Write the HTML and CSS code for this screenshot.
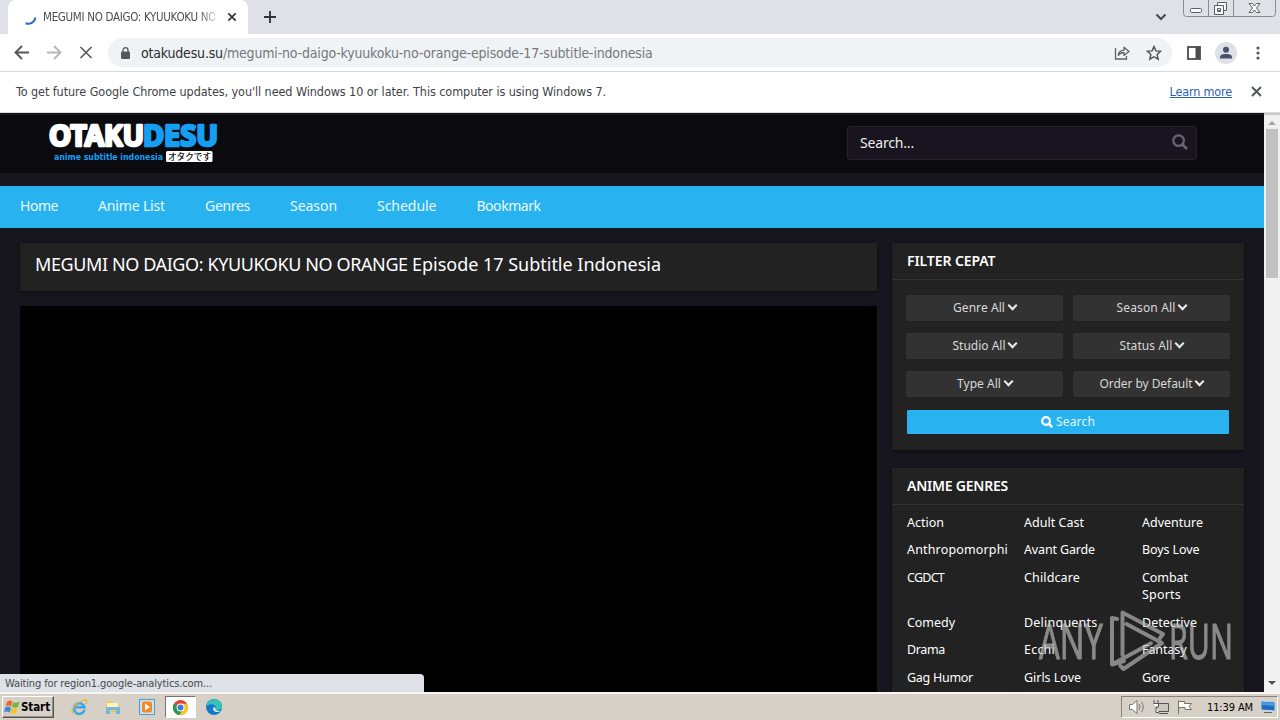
FILE: index.html
```html
<!DOCTYPE html>
<html lang="en">
<head>
<meta charset="utf-8">
<title>MEGUMI NO DAIGO: KYUUKOKU NO ORANGE Episode 17 Subtitle Indonesia</title>
<link rel="stylesheet" href="styles.css">
</head>
<body>
<div class="screen">
  <header class="tabstrip">
    <div class="tab">
      <svg class="spinner" width="16" height="16" viewBox="0 0 16 16"><path d="M1.500 12.300C6.500 14 11 11 11.300 6.500" fill="none" stroke="#2f69c9" stroke-width="2"/></svg>
      <span class="tab-title"><span class="fit" data-w="173">MEGUMI NO DAIGO: KYUUKOKU NO</span></span>
      <svg width="10" height="10" viewBox="0 0 10 10"><path d="M1.300 1.300 8.700 8.700M8.700 1.300 1.300 8.700" stroke="#333639" stroke-width="1.700"/></svg>
    </div>
    <svg class="newtab" width="12" height="12" viewBox="0 0 12 12"><path d="M6 0V12M0 6H12" stroke="#333639" stroke-width="1.900"/></svg>
    <svg class="tabsearch" width="12" height="8" viewBox="0 0 12 8"><path d="M1.500 1.500 6 6 10.500 1.500" fill="none" stroke="#46494e" stroke-width="2"/></svg>
    <svg class="winbtns" width="94" height="17" viewBox="0 0 94 17">
      <path d="M.5 0V13.500Q.5 16.500 3.500 16.500H89.500Q92.500 16.500 92.500 13.500V0M25.500 0V16M50.500 0V16" fill="none" stroke="#898d94"/>
      <g fill="#f7f8fa" stroke="#5b6068"><rect x="7.500" y="8.500" width="11" height="4" rx="1"/><path d="M34.500 2.500H43.500V10.500H34.500Z"/><path d="M31.500 5.500H40.500V14.500H31.500ZM34.500 8.500V11.500H37.500V8.500Z" fill-rule="evenodd"/><path d="M66 3.500H69.500L71.500 6 73.500 3.500H77L73.500 8 77 12.500H73.500L71.500 10 69.500 12.500H66L69.500 8Z"/></g>
    </svg>
  </header>
  <div class="toolbar">
    <svg class="navicons" width="80" height="16" viewBox="0 0 80 16" fill="none" stroke="#54575b" stroke-width="1.900"><path d="M15 7.500H2M8 1 1.500 7.500 8 14"/><path d="M33 7.500H46M40 1 46.500 7.500 40 14" stroke="#b5b7ba"/><path d="M66.500 2 77.500 13M77.500 2 66.500 13" stroke-width="1.600"/></svg>
    <div class="omnibox">
      <svg width="9" height="12" viewBox="0 0 9 12"><rect y="4.500" width="9" height="7.500" rx="1" fill="#54575b"/><path d="M2 5V3.200a2.500 2.500 0 0 1 5 0V5" fill="none" stroke="#54575b" stroke-width="1.300"/></svg>
      <span class="url fit" data-w="511.500"><b>otakudesu.su</b>/megumi-no-daigo-kyuukoku-no-orange-episode-17-subtitle-indonesia</span>
      <svg class="share" width="16" height="14" viewBox="0 0 16 14" fill="none" stroke="#5f6368" stroke-width="1.300"><path d="M1.500 2V13H12.500V10"/><path d="M4.200 9.300C4.700 5.700 7 4.300 10 4.200V1.200L15 5.400 10 9.400V6.500C7.500 6.500 5.600 7.200 4.200 9.300Z" stroke-linejoin="round"/></svg>
      <svg class="star" width="16" height="16" viewBox="0 0 16 16"><path d="M8 1.500 9.900 5.900 14.700 6.300 11.100 9.500 12.200 14.200 8 11.700 3.800 14.200 4.900 9.500 1.300 6.300 6.100 5.900Z" fill="none" stroke="#4e5156" stroke-width="1.400"/></svg>
    </div>
    <svg class="panel" width="14" height="14" viewBox="0 0 14 14"><rect x="1" y="1" width="12" height="12" fill="none" stroke="#494c50" stroke-width="1.800"/><path d="M8.500 1H13V13H8.500Z" fill="#494c50"/></svg>
    <svg class="avatar" width="22" height="22" viewBox="0 0 22 22"><circle cx="11" cy="11" r="11" fill="#dde0e5"/><circle cx="11" cy="7.800" r="3" fill="#46536f"/><path d="M5 16.500V15C5 12.500 8.500 12 11 12S17 12.500 17 15V16.500Z" fill="#46536f"/></svg>
    <svg class="dots" width="4" height="14" viewBox="0 0 4 14" fill="#54575b"><circle cx="2" cy="2" r="1.600"/><circle cx="2" cy="7" r="1.600"/><circle cx="2" cy="12" r="1.600"/></svg>
  </div>
  <div class="infobar">
    <span class="fit" data-w="590">To get future Google Chrome updates, you'll need Windows 10 or later. This computer is using Windows 7.</span>
    <a class="learn"><span class="fit" data-w="62.500">Learn more</span></a>
    <svg width="11" height="11" viewBox="0 0 11 11"><path d="M1 1 10 10M10 1 1 10" stroke="#505357" stroke-width="1.900"/></svg>
  </div>
  <div class="viewport">
    <div class="site">
      <div class="masthead">
        <svg class="logo" width="174" height="44" viewBox="0 0 174 44">
          <g class="wordmark"><text x="2" y="25" textLength="95" lengthAdjust="spacingAndGlyphs" fill="#fff" stroke="#fff">OTAKU</text><text x="96" y="25" textLength="75" lengthAdjust="spacingAndGlyphs" fill="#159ff2" stroke="#159ff2">DESU</text></g>
          <text class="tagline" x="7" y="38.500" textLength="109" lengthAdjust="spacingAndGlyphs">anime subtitle indonesia</text>
          <rect x="119" y="30" width="46.500" height="11" rx="1.500" fill="#fff"/><text class="kana" x="121" y="39" textLength="43">オタクです</text>
        </svg>
        <div class="search"><span class="fit" data-w="54">Search...</span><svg width="16" height="16" viewBox="0 0 16 16" fill="none" stroke="#69666d"><circle cx="6.600" cy="6.600" r="5.300" stroke-width="2.200"/><path d="M10.500 10.500 15 15" stroke-width="2.700"/></svg></div>
      </div>
      <nav class="nav"><a class="fit" data-w="38">Home</a><a class="fit" data-w="67">Anime List</a><a class="fit" data-w="45">Genres</a><a class="fit" data-w="47">Season</a><a class="fit" data-w="59.500">Schedule</a><a class="fit" data-w="64">Bookmark</a></nav>
      <div class="content">
        <main class="main">
          <h1 class="card title"><span class="fit" data-w="377">MEGUMI NO DAIGO: KYUUKOKU NO ORANGE&nbsp;</span><span class="fit" data-w="249">Episode 17 Subtitle Indonesia</span></h1>
          <div class="player"></div>
        </main>
        <aside class="side">
          <section class="card filter">
            <h2><span class="fit" data-w="88.500">FILTER CEPAT</span></h2>
            <div class="grid">
              <div class="pick"><span class="fit" data-w="52">Genre All</span><i></i></div><div class="pick"><span class="fit" data-w="59">Season All</span><i></i></div>
              <div class="pick"><span class="fit" data-w="53">Studio All</span><i></i></div><div class="pick"><span class="fit" data-w="53">Status All</span><i></i></div>
              <div class="pick"><span class="fit" data-w="44">Type All</span><i></i></div><div class="pick"><span class="fit" data-w="93">Order by Default</span><i></i></div>
              <div class="go"><svg width="12" height="12" viewBox="0 0 12 12" fill="none" stroke="#fff"><circle cx="5" cy="5" r="3.900" stroke-width="2.200"/><path d="M8 8 11.200 11.200" stroke-width="2.500"/></svg><span class="fit" data-w="39">Search</span></div>
            </div>
          </section>
          <section class="card genres">
            <h2><span class="fit" data-w="101">ANIME GENRES</span></h2>
            <ul>
              <li><span class="fit" data-w="37">Action</span></li><li><span class="fit" data-w="60">Adult Cast</span></li><li><span class="fit" data-w="61">Adventure</span></li>
              <li><span class="fit" data-w="101">Anthropomorphi</span></li><li><span class="fit" data-w="71">Avant Garde</span></li><li><span class="fit" data-w="57.500">Boys Love</span></li>
              <li><span class="fit" data-w="37">CGDCT</span></li><li><span class="fit" data-w="56">Childcare</span></li><li><span class="fit" data-w="46">Combat</span><br><span class="fit" data-w="39">Sports</span></li>
              <li><span class="fit" data-w="48">Comedy</span></li><li><span class="fit" data-w="73.500">Delinquents</span></li><li><span class="fit" data-w="55">Detective</span></li>
              <li><span class="fit" data-w="38">Drama</span></li><li><span class="fit" data-w="31">Ecchi</span></li><li><span class="fit" data-w="44.500">Fantasy</span></li>
              <li><span class="fit" data-w="66">Gag Humor</span></li><li><span class="fit" data-w="57">Girls Love</span></li><li><span class="fit" data-w="28">Gore</span></li>
            </ul>
          </section>
        </aside>
      </div>
    </div>
    <div class="scrollbar"><svg width="8" height="4" viewBox="0 0 8 4"><path d="M0 4 4 0 8 4Z" fill="#a3a3a3"/></svg><div class="thumb"></div><svg width="8" height="4" viewBox="0 0 8 4"><path d="M0 0 4 4 8 0Z" fill="#505050"/></svg></div>
    <div class="status"><span class="fit" data-w="207">Waiting for region1.google-analytics.com...</span></div>
    <svg class="watermark" width="204" height="68" viewBox="0 0 204 68">
      <g class="run"><text x="5" y="52" textLength="64" lengthAdjust="spacingAndGlyphs">ANY</text><text x="135" y="52" textLength="64" lengthAdjust="spacingAndGlyphs">RUN</text></g>
      <path d="M83 12 78 11V57.500L117 36.300M88.500 48V5.500L129 27 126 31M92.500 17 128 36 89.500 62 86.500 59M78 57.500 90 54" fill="none" stroke="#bdbdbd" stroke-width="4" stroke-linejoin="round" stroke-linecap="round"/>
    </svg>
  </div>
  <footer class="taskbar">
    <div class="start"><svg width="16" height="16" viewBox="0 0 16 16"><path d="M3 2.500Q6 .5 8.500 2.500L7.300 7.500Q4 5.500 1.500 7.500Z" fill="#ee6a2c"/><path d="M9.300 3Q12 4.500 15.500 2.500L14 8Q11 9.500 8 7.700Z" fill="#72b846"/><path d="M1.200 8.500Q4 6.500 7 8.500L5.700 13.700Q3 11.500 0 13.500Z" fill="#4087d3"/><path d="M7.800 9Q10.500 10.500 13.500 9.200L12.300 14Q9 16 6.500 14Z" fill="#f4c22f"/></svg><b class="fit" data-w="29">Start</b></div>
    <div class="apps">
      <svg width="18" height="18" viewBox="0 0 18 18"><path d="M14.500 11.800A5.300 5.300 0 1 1 14.500 9.300H5" fill="none" stroke="#38a8e5" stroke-width="2.500"/><path d="M3 15.500C-1 13 7 4 14 2 17 1 17.500 3 16 6" fill="none" stroke="#e5b83b" stroke-width="1.300"/></svg>
      <svg width="18" height="18" viewBox="0 0 18 18"><path d="M2 3H7L9 5H15V14H2Z" fill="#e8ca6b"/><path d="M3 5H14V9H3Z" fill="#fff3b6"/><path d="M2 9H16V16H12V12H6V16H2Z" fill="#74b9dc"/></svg>
      <svg width="18" height="18" viewBox="0 0 18 18"><rect x="1.500" y="1.500" width="15" height="15" fill="#c8e4f4" stroke="#4b9dcd"/><rect x="4" y="3.500" width="10" height="11" rx="2" fill="#f18b22"/><path d="M7 5.500V12.500L12 9Z" fill="#fff"/></svg>
      <div class="pressed"><svg width="17" height="17" viewBox="0 0 18 18"><circle cx="9" cy="9" r="8" fill="#e34133"/><path d="M2 5A8 8 0 0 0 8 17L12 11 9 9Z" fill="#279b4b"/><path d="M9 5H16A8 8 0 0 1 8 17L12 10Z" fill="#f9c624"/><circle cx="9" cy="9" r="4.200" fill="#fff"/><circle cx="9" cy="9" r="3.200" fill="#387de2"/></svg></div>
      <svg width="18" height="18" viewBox="0 0 18 18"><circle cx="9" cy="9" r="8" fill="#1478c9"/><path d="M1.200 8C2.500-1 17-1 17 8.500 17 12.500 11 13 11 11 12 7 6 4.500 1.200 8Z" fill="#36c2b4"/><path d="M8 9.500C7.500 13.500 12 15.500 16 12.800 12 13.500 10 12 10.500 9.500Z" fill="#d7edf5"/></svg>
    </div>
    <div class="tray">
      <svg width="66" height="16" viewBox="0 0 66 16" fill="#fff" stroke="#77736c"><path d="M1.500 5.500H4.500L9 1.500V14.500L4.500 10.500H1.500Z"/><path d="M11 5Q13 8 11 11M13.500 3Q17 8 13.500 13" fill="none"/><path d="M28.500 4.500H40.500V12.500H28.500Z" fill="#c9c7c1" stroke="#555"/><path d="M31 14.500H40M26 1V4M30 1V4M25.500 4.500H30.500V8H28V13.500H31" stroke="#555"/><path d="M50.500 15V1.500M50.500 2.500H56.500V4.500H63.500L61 7.500 63.500 10.500H57V8.500H50.500"/></svg>
      <span class="fit" data-w="46">11:39 AM</span>
      <svg width="16" height="14" viewBox="0 0 16 14"><path d="M1 1 15 2V11L1 10Z" fill="#2569bd" stroke="#bed8ef"/><path d="M2 2 14 3V6L2 5Z" fill="#4c9de0"/><path d="M4 12.500H12" stroke="#666"/></svg>
    </div>
  </footer>
</div>
<script src="fit.js"></script>
</body>
</html>
```
FILE: fit.js
```js
document.querySelectorAll('.fit').forEach(function (el) {
  var target = parseFloat(el.dataset.w);
  var count = el.textContent.length;
  var natural = el.getBoundingClientRect().width;
  el.style.letterSpacing = ((target - natural) / count).toFixed(3) + 'px';
});
```
FILE: styles.css
```css
* { box-sizing: border-box; }
body { margin: 0; overflow: hidden; font-family: "Noto Sans", "Liberation Sans", sans-serif; }
svg { display: block; flex: none; }
.fit { white-space: nowrap; display: inline-block; }
.screen { width: 1280px; height: 720px; display: flex; flex-direction: column; }
.tabstrip, .toolbar, .infobar, .tab-title, .status, .taskbar { font-family: "DejaVu Sans Condensed", "DejaVu Sans", sans-serif; font-stretch: condensed; }
.tabstrip { height: 34px; flex: none; display: flex; background: #dee1e6; padding-left: 8px; }
.tab { width: 240px; height: 34px; background: #fff; border-radius: 8px 8px 0 0; display: flex; align-items: center; padding: 0 11px 0 16px; }
.spinner { margin-top: 4px; }
.tab-title { width: 172px; margin: 0 12px 0 3px; font-size: 11.500px; color: #4a4d51; overflow: hidden; mask-image: linear-gradient(90deg, #000 90%, #0004); }
.newtab { margin: 11px 0 0 16px; }
.tabsearch { margin: 13px 16px 0 auto; }
.winbtns { margin-right: 3px; }
.toolbar { height: 38px; flex: none; display: flex; align-items: center; background: #fff; border-bottom: 1px solid #d5d8db; padding: 0 20px 0 14px; }
.navicons { margin-right: 14px; }
.omnibox { width: 1064px; height: 29px; border-radius: 15px; background: #f0f3f5; display: flex; align-items: center; padding: 0 10px 0 13px; }
.url { font-size: 14px; color: #74787d; margin-left: 11px; }
.url b { color: #2a2c30; font-weight: 400; }
.share { margin-left: auto; }
.star { margin-left: 16px; }
.panel { margin-left: 15px; }
.avatar { margin-left: 14px; }
.dots { margin-left: auto; }
.infobar { height: 41px; flex: none; background: #fff; display: flex; align-items: center; padding: 0 18px 1px 16px; border-bottom: 1px solid #d8dadd; font-size: 12.500px; color: #404347; }
.learn { margin: 0 19px 0 auto; color: #2a62b5; text-decoration: underline; }
.learn span { text-decoration: underline; }
.viewport { height: 579px; flex: none; display: flex; position: relative; overflow: hidden; }
.site { width: 1264px; background: #17151d; }
.masthead { height: 61px; background: #0b0a0f; border-top: 2px solid #17171b; border-bottom: 1px solid #17171b; display: flex; justify-content: space-between; padding: 4px 67px 0 47px; }
.logo { margin-top: 2px; }
.wordmark { font-family: "Noto Sans", sans-serif; font-weight: 700; font-size: 28px; stroke-width: 2.600px; stroke-linejoin: round; }
.tagline { font-family: "DejaVu Sans", sans-serif; font-weight: 700; font-size: 8px; fill: #159ff2; }
.kana { font-family: "Noto Sans CJK JP", sans-serif; font-weight: 500; font-size: 8.600px; fill: #111; }
.search { width: 350px; height: 34px; margin-top: 7px; border: 1px solid #25222b; border-radius: 3px; background: #19141f; color: #eee; font-size: 14px; display: flex; align-items: center; justify-content: space-between; padding: 0 8px 2px 12px; }
.nav { height: 42px; margin-top: 12px; padding: 0 20px 3px; background: #28b2f0; display: flex; align-items: center; gap: 40px; font-size: 14px; color: #eafaff; }
.content { display: flex; gap: 15px; padding: 15px 20px 0; }
.main { width: 857px; }
.card { background: #222; margin: 0; box-shadow: 0 1px 2px #0e0d12; }
.title { height: 48px; padding: 7px 15px; font-size: 18px; line-height: 28px; font-weight: 400; color: #fff; }
.player { height: 500px; margin-top: 15px; background: #000; }
.side { width: 352px; }
.side h2 { margin: 0; height: 37px; padding: 0 15px; line-height: 36px; font-size: 14px; font-weight: 600; color: #fff; border-bottom: 1px solid #333; }
.filter { height: 207px; margin-bottom: 18px; }
.grid { display: grid; grid-template-columns: 157px 157px; gap: 12px 10px; padding: 15px 14px; }
.pick, .go { height: 26px; background: #323232; color: #d8d8d8; font-size: 12px; display: flex; align-items: center; justify-content: center; gap: 3px; border-radius: 2px; padding: 0 1px 2px 0; }
.pick i { width: 8px; height: 8px; display: flex; align-items: center; justify-content: center; }
.pick i::before { content: ""; width: 5px; height: 5px; margin-top: -3px; border: solid #eee; border-width: 0 2px 2px 0; transform: rotate(45deg); }
.pick .fit { margin-left: 1px; }
.go { grid-column: span 2; height: 24px; margin: 1px 1px 0; border-radius: 1px; background: #28b2f0; color: #e2f7ff; gap: 3px; padding: 0 0 1px; }
.genres { height: 260px; }
.genres ul { list-style: none; margin: 0; padding: 4px 0 0 15px; display: grid; grid-template-columns: 117px 118px 102px; font-size: 12.500px; line-height: 17.500px; color: #fff; }
.genres li { padding: 5px 0; margin-right: 12px; box-shadow: 0 1px #252525; }
.genres li:nth-child(-n+6) { padding-bottom: 4.900px; }
.genres .fit { vertical-align: top; }
.scrollbar { width: 16px; background: #f1f1f1; display: flex; flex-direction: column; align-items: center; padding: 6px 0 7px; border-top: 2px solid #c8c8c8; }
.thumb { width: 12px; height: 149px; margin: 4px 0 auto; background: #c1c1c1; }
.status { position: absolute; left: 0; bottom: 0; width: 424px; height: 18px; background: #dee1e6; border-radius: 0 4px 0 0; padding-left: 5px; font-size: 11px; line-height: 20px; color: #46494d; }
.watermark { position: absolute; left: 1034px; top: 494px; opacity: .65; }
.run { font-family: "Noto Sans", sans-serif; font-size: 50px; fill: #c0c0c0; stroke: #c0c0c0; stroke-width: 1px; }
.taskbar { height: 28px; flex: none; background: #d6d0c6; border-top: 2px solid #f7f5f1; display: flex; align-items: center; padding: 1px 2px; color: #000; font-size: 11px; }
.start { width: 52px; height: 22px; border: 1px solid; border-color: #fff #555 #555 #fff; box-shadow: inset -1px -1px #969188; display: flex; align-items: center; gap: 1px; padding: 0 1px; }
.start b { font-size: 11.500px; }
.apps { display: flex; align-items: center; gap: 16px; margin-left: 16px; }
.pressed { width: 31px; height: 22px; margin: 0 -7px; background: #fff; border: 1px solid; border-color: #77736c #fff #fff #77736c; display: grid; place-items: center; }
.tray { width: 157px; height: 22px; margin-left: auto; border: 1px solid; border-color: #888378 #fff #fff #888378; display: flex; align-items: center; padding: 0 1px 0 6px; }
.tray .fit { margin: 0 7px 0 13px; }
```
